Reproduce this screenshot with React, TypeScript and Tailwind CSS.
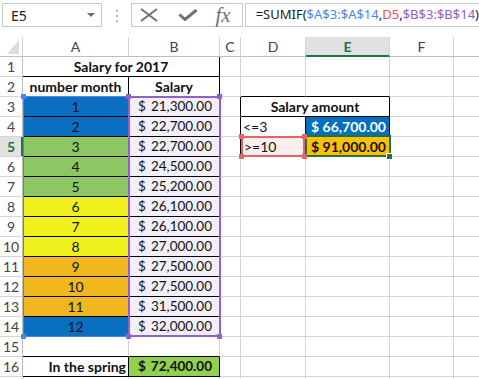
import React from "react";

type Cell = { text?: React.ReactNode; span?: number; cls?: string };

// G is only a sliver at the right edge, its letter is off screen
const COLS = ["A", "B", "C", "D", "E", "F", ""];

// salaries for month 1..12
const SALARIES = [21300, 22700, 22700, 24500, 25200, 26100, 26100, 27000, 27500, 27500, 31500, 32000];

function monthFill(m: number) {
  if (m <= 2 || m === 12) return "bg-[#0b6fc1]";
  if (m <= 5) return "bg-[#8dc763]";
  if (m <= 8) return "bg-[#f0f01c]";
  return "bg-[#f0b71e]";
}

function fmt(n: number) {
  return n.toLocaleString("en-US", { minimumFractionDigits: 2, maximumFractionDigits: 2 });
}

function Money({ value }: { value: number }) {
  return (
    <div className="flex w-full justify-between pl-[9px] pr-[7px] text-[13.5px]">
      <span>$</span>
      <span>{fmt(value)}</span>
    </div>
  );
}

const cells: Record<string, Cell> = {
  "1,1": { span: 2, text: "Salary for 2017", cls: "font-bold justify-center" },
  "2,1": { text: "number month", cls: "font-bold justify-center" },
  "2,2": { text: "Salary", cls: "font-bold justify-center" },
  "3,4": { span: 2, text: "Salary amount", cls: "font-bold justify-center" },
  "4,4": { text: "<=3", cls: "pl-[2px]" },
  "4,5": { text: "$ 66,700.00", cls: "font-bold text-white bg-[#0070c0] justify-end pr-[3px] text-[13.5px]" },
  "5,4": { text: ">=10", cls: "pl-[3px] bg-[#fdeeee]" },
  "5,5": { text: "$ 91,000.00", cls: "font-bold bg-[#ffc000] justify-end pr-[3px] text-[13.5px]" },
  "16,1": { text: "In the spring", cls: "font-bold justify-end pr-[2px]" },
  "16,2": { text: <Money value={72400} />, cls: "font-bold bg-[#92d050]" },
};
SALARIES.forEach((s, i) => {
  const r = i + 3;
  cells[`${r},1`] = { text: i + 1, cls: `justify-center ${monthFill(i + 1)}` };
  cells[`${r},2`] = { text: <Money value={s} />, cls: "bg-[#f3eff9]" };
});

// cells with thin black borders all round
const boxed = new Set<string>(["16,1", "16,2", "3,4", "3,5", "4,4", "4,5", "5,4", "5,5"]);
for (let r = 1; r <= 14; r++) {
  boxed.add(`${r},1`);
  boxed.add(`${r},2`);
}

function SheetRow({ r }: { r: number }) {
  const out: React.ReactNode[] = [];
  const sel = r === 5;
  out.push(
    <div
      key="h"
      className={`flex items-center justify-center border-r border-b text-[14px] ${
        sel
          ? "bg-[#e1e1e1] font-bold text-[#217346] border-r-[#217346] border-b-[#d4d4d4] shadow-[inset_-1px_0_0_#217346]"
          : "text-[#444] border-r-[#bdbdbd] border-b-[#d4d4d4]"
      }`}
    >
      {r <= 16 ? r : ""}
    </div>
  );
  for (let c = 1; c <= 7; ) {
    const cell = cells[`${r},${c}`] ?? {};
    const span = cell.span ?? 1;
    const last = c + span - 1;
    const right = boxed.has(`${r},${last}`) || boxed.has(`${r},${last + 1}`);
    const bottom = boxed.has(`${r},${c}`) || boxed.has(`${r + 1},${c}`);
    out.push(
      <div
        key={c}
        className={`flex items-center overflow-hidden whitespace-nowrap border-r border-b text-[14px] text-[#111] ${
          span === 2 ? "col-span-2" : ""
        } ${right ? "border-r-black" : "border-r-[#d4d4d4]"} ${bottom ? "border-b-black" : "border-b-[#d4d4d4]"} ${
          cell.cls ?? ""
        }`}
      >
        {cell.text}
      </div>
    );
    c += span;
  }
  return <>{out}</>;
}

export default function App() {
  return (
    <div className="relative h-[379px] w-[479px] overflow-hidden bg-white font-['Lato',sans-serif]">
      {/* formula bar */}
      <div className="flex h-[37px] items-start pt-[3px] font-['Noto_Sans',sans-serif]">
        <div className="ml-[2px] flex h-6 w-[102px] items-center justify-between border border-[#c6c6c6] pl-[8px] pr-[6px] text-[14px] text-[#222]">
          <span>E5</span>
          <svg width="8" height="4" viewBox="0 0 8 4">
            <path d="M0 0h8L4 4z" fill="#6b6b6b" />
          </svg>
        </div>
        <div className="ml-[14px] mt-[7px] flex flex-col gap-[3px]">
          <div className="h-[2px] w-[2px] bg-[#b0b0b0]" />
          <div className="h-[2px] w-[2px] bg-[#b0b0b0]" />
          <div className="h-[2px] w-[2px] bg-[#b0b0b0]" />
        </div>
        <div className="ml-[13px] flex h-6 w-[113px] items-center border border-[#c6c6c6] pl-[8px]">
          <svg width="18" height="14" viewBox="0 0 18 14">
            <path d="M1 1L17 13M17 1L1 13" stroke="#717171" strokeWidth="2" fill="none" />
          </svg>
          <svg className="ml-[20px]" width="20" height="12" viewBox="0 0 20 12">
            <path d="M1.5 5.5L7 10.5L18.5 1" stroke="#717171" strokeWidth="3" fill="none" />
          </svg>
          <span className="ml-[17px] font-['Liberation_Serif',serif] text-[21px] italic leading-none text-[#717171]">
            fx
          </span>
        </div>
        <div className="ml-[2px] -mr-px flex h-6 flex-1 items-center border border-[#c6c6c6] pl-[10px] text-[13px] text-[#222] whitespace-nowrap">
          =SUMIF(<span className="text-[#4a86e8]">$A$3:$A$14</span>,<span className="text-[#e34f4f]">D5</span>,
          <span className="text-[#9160c8]">$B$3:$B$14</span>)
        </div>
      </div>

      {/* sheet */}
      <div className="grid w-max grid-cols-[23px_106px_91px_21px_65px_84px_64px_64px] auto-rows-[20px]">
        <div className="relative border-r border-b border-r-[#d4d4d4] border-b-[#bdbdbd]">
          <svg className="absolute left-[7px] top-[3px]" width="12" height="14" viewBox="0 0 12 14">
            <path d="M12 0V14H0z" fill="#dcdcdc" />
          </svg>
        </div>
        {COLS.map((c, i) => (
          <div
            key={i}
            className={`flex items-center justify-center border-r border-b text-[14px] ${
              c === "E"
                ? "bg-[#e1e1e1] font-bold text-[#217346] border-r-[#d4d4d4] border-b-[#217346] shadow-[inset_0_-1px_0_#217346]"
                : "text-[#444] border-r-[#d4d4d4] border-b-[#bdbdbd]"
            }`}
          >
            {c}
          </div>
        ))}
        {Array.from({ length: 17 }, (_, i) => (
          <SheetRow key={i} r={i + 1} />
        ))}
      </div>

      {/* formula reference highlights */}
      <div className="absolute left-[23px] top-[96px] h-[241px] w-[106px] border border-[#4a86e8]" />
      <div className="absolute left-[21px] top-[94px] h-[5px] w-[5px] bg-[#4a86e8]" />
      <div className="absolute left-[21px] top-[334px] h-[5px] w-[5px] bg-[#4a86e8]" />

      <div className="absolute left-[128px] top-[96px] h-[241px] w-[93px] border-2 border-[#9160c8]" />
      <div className="absolute left-[126px] top-[94px] h-[5px] w-[5px] bg-[#9160c8]" />
      <div className="absolute left-[217px] top-[94px] h-[5px] w-[5px] bg-[#9160c8]" />
      <div className="absolute left-[126px] top-[334px] h-[5px] w-[5px] bg-[#9160c8]" />
      <div className="absolute left-[217px] top-[334px] h-[5px] w-[5px] bg-[#9160c8]" />

      {/* active cell E5 */}
      <div className="absolute left-[305px] top-[135px] h-[22px] w-[86px] border-2 border-[#217346]" />

      <div className="absolute left-[241px] top-[136px] h-[21px] w-[64px] border-2 border-[#e46565]" />
      <div className="absolute left-[239px] top-[134px] h-[5px] w-[5px] bg-[#e46565]" />
      <div className="absolute left-[302px] top-[134px] h-[5px] w-[5px] bg-[#e46565]" />
      <div className="absolute left-[239px] top-[154px] h-[5px] w-[5px] bg-[#e46565]" />
      <div className="absolute left-[302px] top-[154px] h-[5px] w-[5px] bg-[#e46565]" />

      <div className="absolute left-[386px] top-[153px] h-[7px] w-[7px] border border-white bg-[#217346]" />
    </div>
  );
}
